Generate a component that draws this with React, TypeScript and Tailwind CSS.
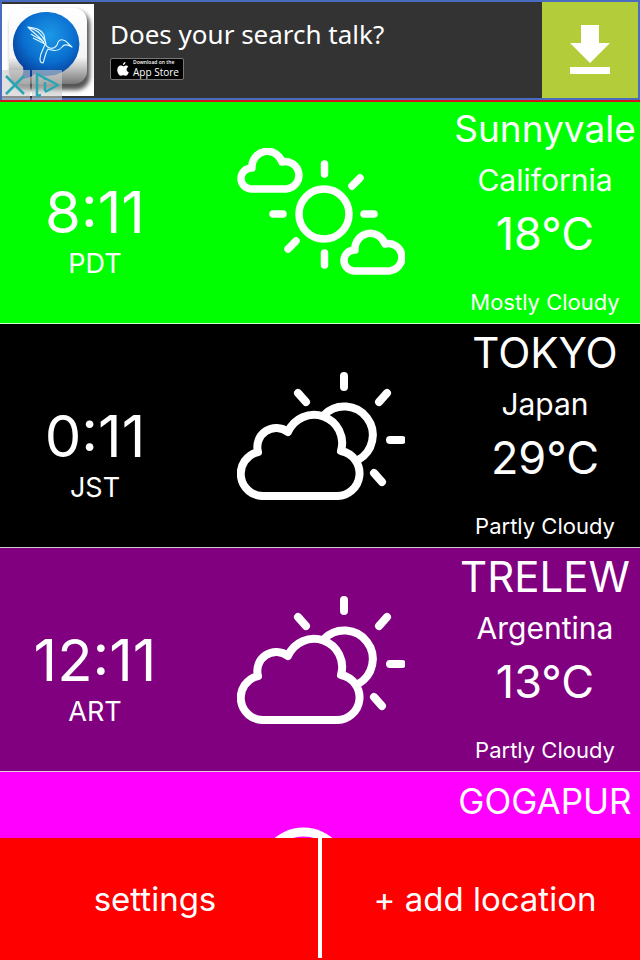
import type { ReactNode } from 'react';
import clsx from 'clsx';

type Condition = 'mostly' | 'partly' | 'cloudy';

type Location = {
  city: string;
  condition: Condition;
  rowClass: string;
  cityClass: string;
  time?: string;
  zone?: string;
  region?: string;
  temp?: string;
  summary?: string;
};

const LOCATIONS: Location[] = [
  {
    time: '8:11',
    zone: 'PDT',
    city: 'Sunnyvale',
    region: 'California',
    temp: '18°C',
    summary: 'Mostly Cloudy',
    condition: 'mostly',
    rowClass: 'bg-[#00ff00]',
    cityClass: 'text-[37px]',
  },
  {
    time: '0:11',
    zone: 'JST',
    city: 'TOKYO',
    region: 'Japan',
    temp: '29°C',
    summary: 'Partly Cloudy',
    condition: 'partly',
    rowClass: 'bg-black',
    cityClass: 'text-[42px]',
  },
  {
    time: '12:11',
    zone: 'ART',
    city: 'TRELEW',
    region: 'Argentina',
    temp: '13°C',
    summary: 'Partly Cloudy',
    condition: 'partly',
    rowClass: 'bg-[#800080]',
    cityClass: 'text-[42px]',
  },
  {
    city: 'GOGAPUR',
    condition: 'cloudy',
    rowClass: 'bg-[#ff00ff]',
    cityClass: 'text-[35px]',
  },
];

const SMALL_CLOUD = 'M14 41A10.5 10.5 0 0 1 15 20A15.4 15.4 0 0 1 45 14A13.7 13.7 0 1 1 49 41Z';

const ICONS: Record<Condition, ReactNode> = {
  mostly: (
    <g strokeWidth="7.5">
      <circle cx="87" cy="66" r="25" />
      <path d="M87.500 16v10M87.500 105v12M36 66h10M127 66h10M115 38l8-8M59 93l-8 8" />
      <path d={SMALL_CLOUD} />
      <path d={SMALL_CLOUD} transform="translate(103 82)" />
    </g>
  ),
  partly: (
    <g strokeWidth="8">
      <path d="M27 124A22.3 22.3 0 0 1 21 80A19 19 0 0 1 51 60A28.2 28.2 0 0 1 104 79A22.7 22.7 0 0 1 99 124Z" />
      <path d="M87 43A28.5 28.5 0 1 1 121 88" />
      <path d="M107 4v11M61 21l8 9M150 21l-8 9M153 68h12M137 101l8 9" />
    </g>
  ),
  cloudy: (
    <g strokeWidth="9">
      <path d="M32 122A30 30 0 0 1 27 63A40.8 40.8 0 1 1 106 63A30 30 0 1 1 118 122Z" />
    </g>
  ),
};

const WeatherIcon = ({ condition }: { condition: Condition }) => (
  <svg
    viewBox="0 0 168 128"
    className="w-[168px] h-32"
    fill="none"
    stroke="white"
    strokeLinecap="round"
    strokeLinejoin="round"
    aria-hidden="true"
  >
    {ICONS[condition]}
  </svg>
);

const LocationRow = ({ location }: { location: Location }) => (
  <li
    className={clsx(
      'grid grid-cols-[190px_1fr_190px] h-56 border-b border-white/80 text-center whitespace-nowrap',
      location.rowClass,
    )}
  >
    <div className="pt-20">
      {location.time && <p className="text-[58px] leading-16">{location.time}</p>}
      {location.zone && <p className="text-[27px] leading-10">{location.zone}</p>}
    </div>
    <div className="flex justify-center pt-12 pl-0.5">
      <WeatherIcon condition={location.condition} />
    </div>
    <div>
      <h2 className={clsx('leading-[58px]', location.cityClass)}>{location.city}</h2>
      {location.region && <p className="text-[30px] leading-11">{location.region}</p>}
      {location.temp && <p className="text-[45px] leading-16">{location.temp}</p>}
      {location.summary && <p className="pt-4 text-[22px] leading-10">{location.summary}</p>}
    </div>
  </li>
);

const AppStoreBadge = () => (
  <span className="flex items-center gap-1 w-[74px] h-[22px] pl-1.5 bg-black border border-[#777] rounded-xs">
    <svg viewBox="0 0 24 28" className="w-3 h-3.5" fill="white" aria-hidden="true">
      <path d="M17 0c.3 3-2.200 6-5.200 6.200C11.500 3.300 14.200.4 17 0zM22.500 9.500c-5 3-4 9 1 11-1.200 3.500-3.500 7-6 7-2 0-2.800-1.200-5-1.200s-3 1.200-5 1.200C4 27.500.5 21 .5 16c0-6 3.500-9 7-9 2.200 0 3.500 1.300 5 1.300S16 6.800 18.200 6.800c1.700 0 3.300.9 4.300 2.700z" />
    </svg>
    <span className="flex flex-col font-['Open_Sans',sans-serif] whitespace-nowrap">
      <span className="text-[5px] leading-[7px] font-semibold">Download on the</span>
      <span className="text-[10px] leading-[13px] font-medium">App Store</span>
    </span>
  </span>
);

const BirdLogo = () => (
  <svg viewBox="0 0 92 92" className="w-[92px] h-[92px] self-center" aria-hidden="true">
    <defs>
      <linearGradient id="tile" x1="0" y1="0" x2="0" y2="1">
        <stop offset="0" stopColor="#fff" />
        <stop offset="0.65" stopColor="#f4f4f4" />
        <stop offset="1" stopColor="#777" />
      </linearGradient>
      <radialGradient id="bubble" cx="0.55" cy="0.35" r="0.65">
        <stop offset="0" stopColor="#1c98e6" />
        <stop offset="0.6" stopColor="#0a6fd0" />
        <stop offset="1" stopColor="#053c96" />
      </radialGradient>
      <filter id="soft" x="-20%" y="-20%" width="140%" height="140%">
        <feGaussianBlur stdDeviation="2" />
      </filter>
    </defs>
    <rect width="92" height="92" fill="white" />
    <rect x="9" y="7" width="79" height="79" rx="14" fill="#555" filter="url(#soft)" />
    <rect x="7" y="4" width="78" height="76" rx="13" fill="url(#tile)" />
    <path
      d="M46 8a33 32 0 1 1-13 62c-5 4-10 5-15 5 3-3 4-7 3-12A33 32 0 0 1 46 8z"
      fill="url(#bubble)"
    />
    {/* hummingbird */}
    <path
      d="M42 39c-3-6-10-9-16-16 7 1 13 2 16 8l2 10M26 23c5 2 12 3 18 16M29 30c4 3 8 4 13 8M31 34c4 2 8 4 12 6M43 40c3 5 9 6 12 1 1-4 3-6 6-5 3 0 4 3 9 7-5-3-8-3-10 0-3 4-9 4-14 2-3 4-3 9-5 14-2 0-3-1-3-4 0-7 4-10 5-15z"
      fill="none"
      stroke="#dff6ff"
      strokeWidth="1.2"
      strokeLinejoin="round"
    />
  </svg>
);

const AdBanner = () => (
  <header className="relative z-10 border-b-2 border-[#d4161c]">
    <div className="relative flex h-25 border-2 border-[#4a6cc0] bg-[#333]">
      <BirdLogo />
      <div className="flex-1 pl-4 pt-3 font-['Noto_Sans',sans-serif]">
        <p className="mb-1 text-[26px] leading-10 whitespace-nowrap">Does your search talk?</p>
        <AppStoreBadge />
      </div>
      <button type="button" aria-label="Download" className="flex items-center justify-center w-24 bg-[#b2cc3a]">
        <svg viewBox="0 0 40 50" className="w-10 h-[50px]" fill="white" aria-hidden="true">
          <path d="M11 0h18v18h11L20 38 0 18h11zM0 42h40v7H0z" />
        </svg>
      </button>
      {/* ad choices */}
      <div className="absolute left-0 top-[68px] flex gap-0.5">
        <button type="button" aria-label="Close ad" className="w-7 h-[30px] bg-[#ccc]/60">
          <svg viewBox="0 0 28 30" fill="none" stroke="#2ba5b5" strokeWidth="2.500" aria-hidden="true">
            <path d="M4 6l18 18M22 6L4 24" />
          </svg>
        </button>
        <button type="button" aria-label="Ad choices" className="w-[30px] h-[30px] bg-[#ccc]/60">
          <svg viewBox="0 0 30 30" fill="none" stroke="#2ba5b5" strokeWidth="2.500" strokeLinejoin="round" aria-hidden="true">
            <path d="M9 25l-4 1V4l21 11-13 7M13 12v9M13 7v3" />
          </svg>
        </button>
      </div>
    </div>
  </header>
);

export default function App() {
  return (
    <div className="flex flex-col h-screen overflow-hidden bg-[#ff0000] text-white font-['Inter',sans-serif]">
      <AdBanner />
      <main className="flex-1 min-h-0 -mt-0.5 overflow-y-auto [scrollbar-width:none]">
        <ul>
          {LOCATIONS.map((location) => (
            <LocationRow key={location.city} location={location} />
          ))}
        </ul>
      </main>
      <nav className="flex shrink-0 h-[122px] pb-0.5 text-[33px] bg-[#ff0000]">
        <button type="button" className="flex-1 pr-2 pt-1">
          settings
        </button>
        <div className="w-1 bg-white" />
        <button type="button" className="flex-1 pl-2 pt-1">
          + add location
        </button>
      </nav>
    </div>
  );
}
